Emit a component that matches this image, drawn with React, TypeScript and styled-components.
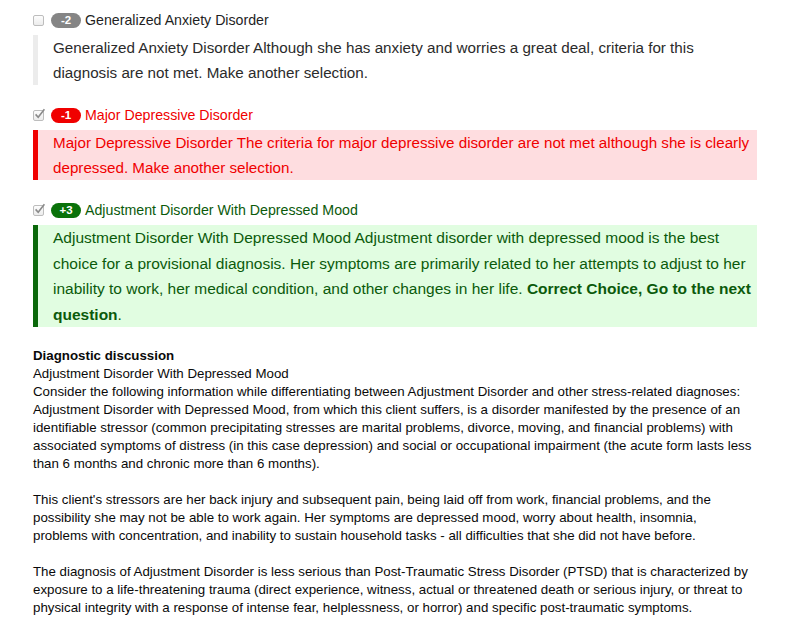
import React from "react";
import styled, { createGlobalStyle } from "styled-components";

// Type
type Tone = "NEUTRAL" | "WRONG" | "RIGHT";

interface Choice {
  score: string;
  title: string;
  tone: Tone;
  checked: boolean;
  body: React.ReactNode;
}

const palette = {
  NEUTRAL: { badge: "#858585", label: "#1f1f1f", text: "#2b2b2b", bg: "#ffffff", border: "#ececec", size: 15.2, lh: 25 },
  WRONG: { badge: "#f00000", label: "#f00000", text: "#f00000", bg: "#fedde0", border: "#f00000", size: 15.2, lh: 25 },
  RIGHT: { badge: "#0a720a", label: "#0b5a0b", text: "#0b5a0b", bg: "#e1fde1", border: "#0a680a", size: 15.5, lh: 25.5 },
};

const choices: Choice[] = [
  {
    score: "-2",
    title: "Generalized Anxiety Disorder",
    tone: "NEUTRAL",
    checked: false,
    body: "Generalized Anxiety Disorder Although she has anxiety and worries a great deal, criteria for this diagnosis are not met. Make another selection.",
  },
  {
    score: "-1",
    title: "Major Depressive Disorder",
    tone: "WRONG",
    checked: true,
    body: "Major Depressive Disorder The criteria for major depressive disorder are not met although she is clearly depressed. Make another selection.",
  },
  {
    score: "+3",
    title: "Adjustment Disorder With Depressed Mood",
    tone: "RIGHT",
    checked: true,
    body: (
      <>
        Adjustment Disorder With Depressed Mood Adjustment disorder with depressed mood is the best choice for a
        provisional diagnosis. Her symptoms are primarily related to her attempts to adjust to her inability to work,
        her medical condition, and other changes in her life. <strong>Correct Choice, Go to the next question</strong>.
      </>
    ),
  },
];

function CheckMark({ checked }: { checked: boolean }) {
  return (
    <Check>
      {checked && (
        <svg width="13" height="13" viewBox="0 0 13 13">
          <path d="M2.6 6.4 L5.2 9.2 L11.4 1.2" fill="none" stroke="#8a8a8a" strokeWidth="1.6" />
        </svg>
      )}
    </Check>
  );
}

export default function App() {
  return (
    <>
      <GlobalStyle />
      <Page>
        {choices.map((c) => (
          <Item key={c.title}>
            <LabelRow>
              <CheckMark checked={c.checked} />
              <Badge tone={c.tone}>{c.score}</Badge>
              <Label tone={c.tone}>{c.title}</Label>
            </LabelRow>
            <Feedback tone={c.tone}>{c.body}</Feedback>
          </Item>
        ))}

        <Discussion>
          <p>
            <strong>Diagnostic discussion</strong>
            <br />
            Adjustment Disorder With Depressed Mood
            <br />
            Consider the following information while differentiating between Adjustment Disorder and other
            stress-related diagnoses:
            <br />
            Adjustment Disorder with Depressed Mood, from which this client suffers, is a disorder manifested by the
            presence of an identifiable stressor (common precipitating stresses are marital problems, divorce, moving,
            and financial problems) with associated symptoms of distress (in this case depression) and social or
            occupational impairment (the acute form lasts less than 6 months and chronic more than 6 months).
          </p>
          <p>
            This client's stressors are her back injury and subsequent pain, being laid off from work, financial
            problems, and the possibility she may not be able to work again. Her symptoms are depressed mood, worry
            about health, insomnia, problems with concentration, and inability to sustain household tasks - all
            difficulties that she did not have before.
          </p>
          <p>
            The diagnosis of Adjustment Disorder is less serious than Post-Traumatic Stress Disorder (PTSD) that is
            characterized by exposure to a life-threatening trauma (direct experience, witness, actual or threatened
            death or serious injury, or threat to physical integrity with a response of intense fear, helplessness, or
            horror) and specific post-traumatic symptoms.
          </p>
        </Discussion>
      </Page>
    </>
  );
}

const GlobalStyle = createGlobalStyle`
  html, body {
    margin: 0;
    padding: 0;
    background: #ffffff;
  }
  body {
    font-family: "Liberation Sans", Arial, Helvetica, sans-serif;
    color: #000;
  }
`;

const Page = styled.div`
  width: 724px;
  padding: 10px 0 0 33px;
`;

const Item = styled.div`
  margin-bottom: 20px;
`;

const LabelRow = styled.div`
  display: flex;
  align-items: center;
  height: 20px;
  margin-bottom: 5px;
`;

const Check = styled.span`
  position: relative;
  display: block;
  box-sizing: border-box;
  width: 11px;
  height: 11px;
  border: 1px solid #bdbdbd;
  border-radius: 2px;
  background: linear-gradient(#fdfdfd, #ececec);
  margin-right: 7px;

  & svg {
    position: absolute;
    left: -1px;
    top: -3px;
  }
`;

const Badge = styled.span<{ tone: Tone }>`
  display: inline-flex;
  align-items: center;
  justify-content: center;
  width: 30px;
  height: 15px;
  border-radius: 8px;
  background: ${(p) => palette[p.tone].badge};
  color: #ffffff;
  font-size: 11.5px;
  font-weight: bold;
  margin-right: 4px;
`;

const Label = styled.span<{ tone: Tone }>`
  font-size: 14.2px;
  color: ${(p) => palette[p.tone].label};
`;

const Feedback = styled.div<{ tone: Tone }>`
  border-left: 5px solid ${(p) => palette[p.tone].border};
  background: ${(p) => palette[p.tone].bg};
  color: ${(p) => palette[p.tone].text};
  padding: 0 2px 0 15px;
  font-size: ${(p) => palette[p.tone].size}px;
  line-height: ${(p) => palette[p.tone].lh}px;

  & strong {
    font-weight: bold;
  }
`;

const Discussion = styled.div`
  width: 720px;
  font-size: 13.3px;
  line-height: 18px;
  color: #0a0a0a;

  & p {
    margin: 0 0 18px;
  }
`;
